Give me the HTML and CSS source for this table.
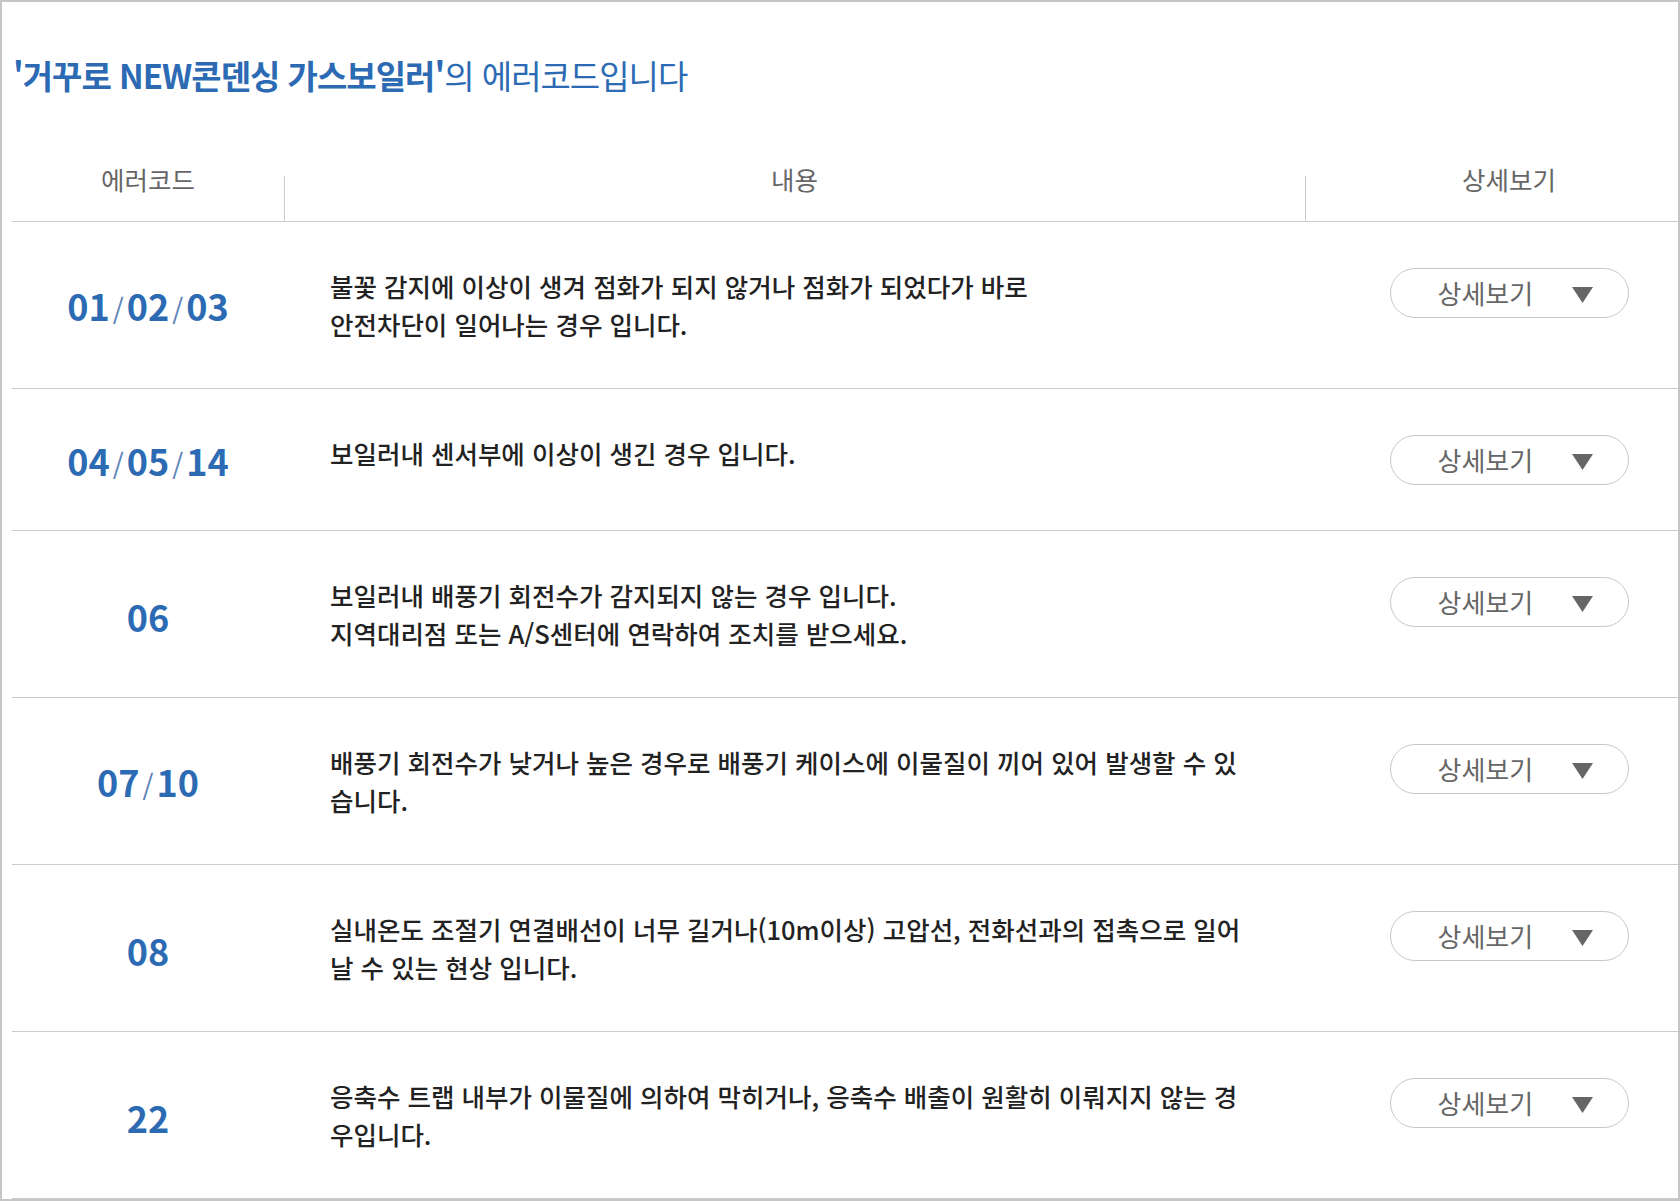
FILE: index.html
```html
<!DOCTYPE html>
<html lang="ko">
<head>
<meta charset="utf-8">
<title>에러코드</title>
<link rel="stylesheet" href="styles.css">
</head>
<body>
<div class="frame">
  <h1 class="title"><strong>'거꾸로 NEW콘덴싱 가스보일러'</strong>의 에러코드입니다</h1>
  <div class="table">
    <div class="thead">
      <div class="th">에러코드</div>
      <div class="th sep">내용</div>
      <div class="th sep">상세보기</div>
    </div>

    <div class="row">
      <div class="code">01<span class="sl">/</span>02<span class="sl">/</span>03</div>
      <div class="desc">불꽃 감지에 이상이 생겨 점화가 되지 않거나 점화가 되었다가 바로<br>안전차단이 일어나는 경우 입니다.</div>
      <div class="more"><button class="btn" type="button"><span>상세보기</span><svg class="tri" width="21" height="16" viewBox="0 0 21 16"><polygon points="0,0 21,0 10.5,16"/></svg></button></div>
    </div>

    <div class="row">
      <div class="code">04<span class="sl">/</span>05<span class="sl">/</span>14</div>
      <div class="desc">보일러내 센서부에 이상이 생긴 경우 입니다.</div>
      <div class="more"><button class="btn" type="button"><span>상세보기</span><svg class="tri" width="21" height="16" viewBox="0 0 21 16"><polygon points="0,0 21,0 10.5,16"/></svg></button></div>
    </div>

    <div class="row">
      <div class="code">06</div>
      <div class="desc">보일러내 배풍기 회전수가 감지되지 않는 경우 입니다.<br>지역대리점 또는 A/S센터에 연락하여 조치를 받으세요.</div>
      <div class="more"><button class="btn" type="button"><span>상세보기</span><svg class="tri" width="21" height="16" viewBox="0 0 21 16"><polygon points="0,0 21,0 10.5,16"/></svg></button></div>
    </div>

    <div class="row">
      <div class="code">07<span class="sl">/</span>10</div>
      <div class="desc">배풍기 회전수가 낮거나 높은 경우로 배풍기 케이스에 이물질이 끼어 있어 발생할 수 있<br>습니다.</div>
      <div class="more"><button class="btn" type="button"><span>상세보기</span><svg class="tri" width="21" height="16" viewBox="0 0 21 16"><polygon points="0,0 21,0 10.5,16"/></svg></button></div>
    </div>

    <div class="row">
      <div class="code">08</div>
      <div class="desc">실내온도 조절기 연결배선이 너무 길거나(10m이상) 고압선, 전화선과의 접촉으로 일어<br>날 수 있는 현상 입니다.</div>
      <div class="more"><button class="btn" type="button"><span>상세보기</span><svg class="tri" width="21" height="16" viewBox="0 0 21 16"><polygon points="0,0 21,0 10.5,16"/></svg></button></div>
    </div>

    <div class="row">
      <div class="code">22</div>
      <div class="desc">응축수 트랩 내부가 이물질에 의하여 막히거나, 응축수 배출이 원활히 이뤄지지 않는 경<br>우입니다.</div>
      <div class="more"><button class="btn" type="button"><span>상세보기</span><svg class="tri" width="21" height="16" viewBox="0 0 21 16"><polygon points="0,0 21,0 10.5,16"/></svg></button></div>
    </div>
  </div>
</div>
</body>
</html>
```

FILE: styles.css
```css
* { box-sizing: border-box; }
html, body { margin: 0; padding: 0; background: #fff; }
body {
  font-family: "Noto Sans CJK KR", "Noto Sans", sans-serif;
  color: #333;
}
.frame {
  width: 1680px;
  height: 1201px;
  border: 2px solid #c6c6c6;
  padding-left: 10px;
  overflow: hidden;
}
.title {
  margin: 0;
  padding: 52px 0 0 1px;
  font-size: 33px;
  line-height: 42px;
  letter-spacing: -1px;
  font-weight: 400;
  color: #2c6bb4;
  white-space: nowrap;
}
.title strong { font-weight: 700; }
.table { width: 1701px; }
.thead, .row {
  display: grid;
  grid-template-columns: 272px 1021px 408px;
  border-bottom: 1px solid #cccccc;
}
.th {
  position: relative;
  padding: 68px 0 27px;
  font-size: 25.5px;
  line-height: 30px;
  color: #666;
  text-align: center;
}
.th.sep::before {
  content: "";
  position: absolute;
  left: 0;
  bottom: 0;
  width: 1px;
  height: 45px;
  background: #cccccc;
}
.code {
  align-self: center;
  text-align: center;
  font-size: 36px;
  line-height: 40px;
  font-weight: 700;
  color: #2c6bb4;
  padding-top: 4px;
}
.sl {
  font-weight: 400;
  font-size: 28px;
  margin: 0 3px;
  color: #5a82b8;
}
.desc {
  padding: 45px 46px;
  font-size: 25.5px;
  line-height: 38px;
  font-weight: 500;
  color: #222;
  white-space: nowrap;
}
.more {
  display: flex;
  justify-content: center;
  align-items: flex-start;
  padding: 46px 0 45px;
}
.btn {
  display: flex;
  align-items: center;
  width: 239px;
  height: 50px;
  padding: 0 35px 0 47px;
  border: 1px solid #c8c8c8;
  border-radius: 25px;
  background: #fff;
  font-family: inherit;
  font-size: 26px;
  color: #666;
  cursor: pointer;
}
.btn span { line-height: 30px; }
.tri {
  margin-left: auto;
  margin-top: 3px;
  fill: #666;
}
```
